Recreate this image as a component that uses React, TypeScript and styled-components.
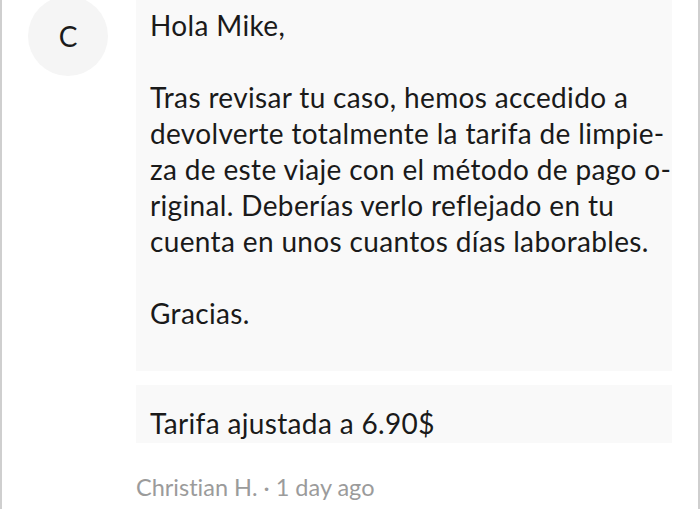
import React from "react";
import styled, { createGlobalStyle } from "styled-components";

const Global = createGlobalStyle`
  html, body { margin: 0; padding: 0; background: #ffffff; }
  body {
    font-family: "Lato", "Noto Sans", sans-serif;
    font-variant-ligatures: none;
    font-feature-settings: "liga" 0, "dlig" 0;
  }
`;

const Page = styled.div`
  box-sizing: border-box;
  width: 700px;
  height: 509px;
  overflow: hidden;
  border-left: 2px solid #cfcfcf;
  border-right: 2px solid #cfcfcf;
  background: #ffffff;
`;

const Row = styled.div`
  display: flex;
  align-items: flex-start;
  gap: 28px;
  margin-top: -4px;
  padding-left: 26px;
`;

const Avatar = styled.div`
  flex: none;
  width: 80px;
  height: 80px;
  border-radius: 50%;
  background: #f5f5f5;
  display: flex;
  align-items: center;
  justify-content: center;
  font-size: 28px;
  color: #1b1b1b;
`;

const Thread = styled.div`
  width: 536px;
  display: flex;
  flex-direction: column;
  gap: 14px;
`;

const Bubble = styled.div<{ $tight?: boolean }>`
  box-sizing: border-box;
  background: #f9f9f9;
  padding: ${(p) => (p.$tight ? "20px 14px 0" : "11px 14px 40px")};
  height: ${(p) => (p.$tight ? "58px" : "auto")};
  overflow: hidden;
  font-size: 28px;
  letter-spacing: 0.35px;
  line-height: 36px;
  color: #1a1a1a;
  white-space: nowrap;
`;

const Para = styled.p`
  margin: 0 0 36px;
  &:last-child { margin-bottom: 0; }
`;

const Meta = styled.div`
  margin-top: 29px;
  padding-left: 134px;
  font-size: 23.5px;
  line-height: 30px;
  color: #9b9b9b;
`;

export default function App() {
  return (
    <>
      <Global />
      <Page>
        <Row>
          <Avatar>C</Avatar>
          <Thread>
            <Bubble>
              <Para>Hola Mike,</Para>
              <Para>
                Tras revisar tu caso, hemos accedido a<br />
                devolverte totalmente la tarifa de limpie-<br />
                za de este viaje con el método de pago o-<br />
                riginal. Deberías verlo reflejado en tu<br />
                cuenta en unos cuantos días laborables.
              </Para>
              <Para>Gracias.</Para>
            </Bubble>
            <Bubble $tight>Tarifa ajustada a 6.90$</Bubble>
          </Thread>
        </Row>
        <Meta>Christian H. · 1 day ago</Meta>
      </Page>
    </>
  );
}
